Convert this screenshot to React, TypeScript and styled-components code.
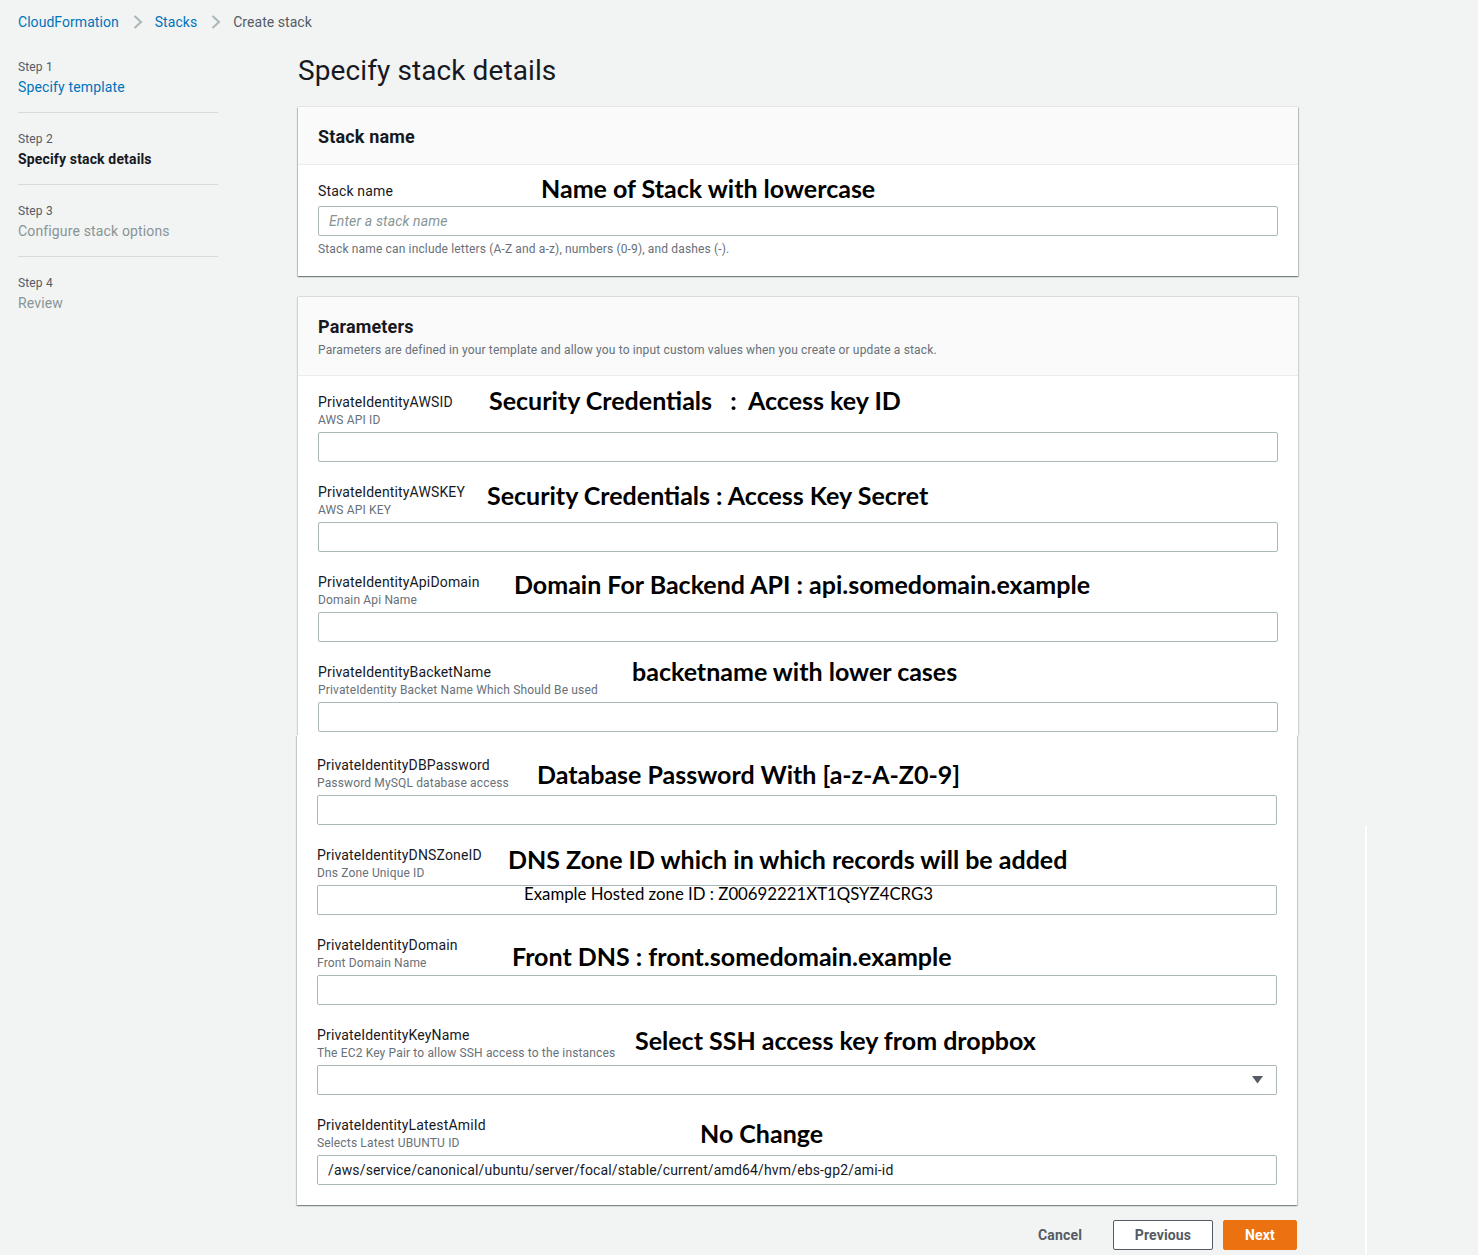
import React from "react";
import styled, { createGlobalStyle } from "styled-components";

type Note = { text: string; x: number; y: number };

type Param = {
  name: string;
  desc: string;
  note: Note;
  value?: string;
  select?: boolean;
  extra?: Note;
};

const upperParams: Param[] = [
  {
    name: "PrivateIdentityAWSID",
    desc: "AWS API ID",
    note: { text: "Security Credentials   :  Access key ID", x: 171, y: -7 },
  },
  {
    name: "PrivateIdentityAWSKEY",
    desc: "AWS API KEY",
    note: { text: "Security Credentials : Access Key Secret", x: 169, y: -2 },
  },
  {
    name: "PrivateIdentityApiDomain",
    desc: "Domain Api Name",
    note: { text: "Domain For Backend API : api.somedomain.example", x: 196, y: -3 },
  },
  {
    name: "PrivateIdentityBacketName",
    desc: "PrivateIdentity Backet Name Which Should Be used",
    note: { text: "backetname with lower cases", x: 314, y: -6 },
  },
];

const lowerParams: Param[] = [
  {
    name: "PrivateIdentityDBPassword",
    desc: "Password MySQL database access",
    note: { text: "Database Password With [a-z-A-Z0-9]", x: 220, y: 4 },
  },
  {
    name: "PrivateIdentityDNSZoneID",
    desc: "Dns Zone Unique ID",
    note: { text: "DNS Zone ID which in which records will be added", x: 191, y: -1 },
    extra: { text: "Example Hosted zone ID : Z00692221XT1QSYZ4CRG3", x: 207, y: 39 },
  },
  {
    name: "PrivateIdentityDomain",
    desc: "Front Domain Name",
    note: { text: "Front DNS : front.somedomain.example", x: 195, y: 6 },
  },
  {
    name: "PrivateIdentityKeyName",
    desc: "The EC2 Key Pair to allow SSH access to the instances",
    note: { text: "Select SSH access key from dropbox", x: 318, y: 0 },
    select: true,
  },
  {
    name: "PrivateIdentityLatestAmiId",
    desc: "Selects Latest UBUNTU ID",
    note: { text: "No Change", x: 383, y: 3 },
    value: "/aws/service/canonical/ubuntu/server/focal/stable/current/amd64/hvm/ebs-gp2/ami-id",
  },
];

const steps = [
  { step: "Step 1", title: "Specify template", state: "done" },
  { step: "Step 2", title: "Specify stack details", state: "active" },
  { step: "Step 3", title: "Configure stack options", state: "todo" },
  { step: "Step 4", title: "Review", state: "todo" },
] as const;

export default function App() {
  return (
    <>
      <GlobalStyle />
      <Breadcrumbs>
        <Crumb $link>CloudFormation</Crumb>
        <Chevron />
        <Crumb $link>Stacks</Crumb>
        <Chevron />
        <Crumb>Create stack</Crumb>
      </Breadcrumbs>

      <Layout>
        <Nav>
          {steps.map((s) => (
            <NavItem key={s.step}>
              <StepLabel>{s.step}</StepLabel>
              <StepTitle $state={s.state}>{s.title}</StepTitle>
            </NavItem>
          ))}
        </Nav>

        <Main>
          <Title>Specify stack details</Title>

          <Panel>
            <PanelHeader>
              <PanelTitle>Stack name</PanelTitle>
            </PanelHeader>
            <StackBody>
              <Field>
                <Label>Stack name</Label>
                <Annotation $x={223} $y={-8}>
                  Name of Stack with lowercase
                </Annotation>
                <Input $gap={5} placeholder="Enter a stack name" />
                <Hint>
                  Stack name can include letters (A-Z and a-z), numbers (0-9),
                  and dashes (-).
                </Hint>
              </Field>
            </StackBody>
          </Panel>

          <ParamsPanel>
            <PanelHeader>
              <PanelTitle>Parameters</PanelTitle>
              <PanelDesc>
                Parameters are defined in your template and allow you to input
                custom values when you create or update a stack.
              </PanelDesc>
            </PanelHeader>
            <FieldList $top={16} $bottom={3}>
              {upperParams.map((p) => (
                <ParamField key={p.name} param={p} />
              ))}
            </FieldList>
          </ParamsPanel>

          <Shifted>
            <ParamsPanelEnd>
              <FieldList $top={20} $bottom={20}>
                {lowerParams.map((p) => (
                  <ParamField key={p.name} param={p} />
                ))}
              </FieldList>
            </ParamsPanelEnd>
            <Actions>
              <TextButton>Cancel</TextButton>
              <OutlineButton>Previous</OutlineButton>
              <PrimaryButton>Next</PrimaryButton>
            </Actions>
          </Shifted>
        </Main>
      </Layout>
      <SeamLine />
    </>
  );
}

function ParamField({ param }: { param: Param }) {
  return (
    <Field>
      <Label>{param.name}</Label>
      <Desc>{param.desc}</Desc>
      <Annotation $x={param.note.x} $y={param.note.y}>
        {param.note.text}
      </Annotation>
      {param.select ? (
        <SelectBox>
          <svg width="11" height="8" viewBox="0 0 11 8">
            <path d="M0 0h11L5.5 7.5z" fill="#545b64" />
          </svg>
        </SelectBox>
      ) : (
        <Input $gap={4} defaultValue={param.value} readOnly />
      )}
      {param.extra && (
        <InlineNote $x={param.extra.x} $y={param.extra.y}>
          {param.extra.text}
        </InlineNote>
      )}
    </Field>
  );
}

function Chevron() {
  return (
    <ChevronIcon width="10" height="14" viewBox="0 0 10 14">
      <polyline
        points="1.5,1 8,7 1.5,13"
        fill="none"
        stroke="#aab7b8"
        strokeWidth="2"
      />
    </ChevronIcon>
  );
}

const GlobalStyle = createGlobalStyle`
  * { box-sizing: border-box; }
  body {
    margin: 0;
    background: #f2f3f3;
    font-family: Roboto, "Noto Sans", sans-serif;
    letter-spacing: 0.15px;
    color: #16191f;
  }
`;

const Breadcrumbs = styled.div`
  display: flex;
  align-items: center;
  height: 32px;
  padding: 12px 18px 0;
  font-size: 14px;
  line-height: 20px;
  letter-spacing: 0.05px;
`;

const Crumb = styled.span<{ $link?: boolean }>`
  color: ${(p) => (p.$link ? "#0073bb" : "#545b64")};
`;

const ChevronIcon = styled.svg`
  margin: 0 12px 0 14px;
`;

const Layout = styled.div`
  display: grid;
  grid-template-columns: 200px 1000px;
  column-gap: 80px;
  padding: 21px 0 0 18px;
`;

const Nav = styled.nav`
  display: flex;
  flex-direction: column;
`;

const NavItem = styled.div`
  display: flex;
  flex-direction: column;
  gap: 2px;
  padding: 18px 0 15px;
  border-bottom: 1px solid #d5dbdb;

  &:first-child {
    padding-top: 6px;
  }
  &:last-child {
    border-bottom: none;
  }
`;

const StepLabel = styled.span`
  font-size: 12px;
  line-height: 16px;
  color: #545b64;
`;

const StepTitle = styled.span<{ $state: "done" | "active" | "todo" }>`
  font-size: 14px;
  line-height: 20px;
  font-weight: ${(p) => (p.$state === "active" ? 700 : 400)};
  color: ${(p) =>
    p.$state === "done" ? "#0073bb" : p.$state === "active" ? "#16191f" : "#879596"};
`;

const Main = styled.main`
  display: flex;
  flex-direction: column;
  width: 1000px;
`;

const Title = styled.h1`
  margin: 0 0 18px;
  font-size: 28px;
  line-height: 36px;
  font-weight: 400;
  letter-spacing: 0.1px;
  color: #16191f;
`;

const Panel = styled.section`
  background: #fff;
  box-shadow: 0 0 0 1px rgba(0, 28, 36, 0.06), 0 1px 1px 0 rgba(0, 28, 36, 0.3),
    1px 1px 1px 0 rgba(0, 28, 36, 0.15), -1px 1px 1px 0 rgba(0, 28, 36, 0.15);
`;

const ParamsPanel = styled.section`
  margin-top: 21px;
  background: #fff;
  box-shadow: 0 -1px 0 0 rgba(0, 28, 36, 0.06), 1px 0 1px 0 rgba(0, 28, 36, 0.15),
    -1px 0 1px 0 rgba(0, 28, 36, 0.15);
`;

const Shifted = styled.div`
  margin-left: -1px;
  width: 1000px;
  display: flex;
  flex-direction: column;
`;

const ParamsPanelEnd = styled.section`
  background: #fff;
  box-shadow: 0 1px 1px 0 rgba(0, 28, 36, 0.3), 1px 1px 1px 0 rgba(0, 28, 36, 0.15),
    -1px 1px 1px 0 rgba(0, 28, 36, 0.15);
`;

const PanelHeader = styled.header`
  display: flex;
  flex-direction: column;
  gap: 5px;
  padding: 20px 20px 17px;
  background: #fafafa;
  border-bottom: 1px solid #eaeded;
`;

const PanelTitle = styled.h2`
  margin: 0;
  font-size: 18px;
  line-height: 20px;
  font-weight: 700;
  color: #16191f;
`;

const PanelDesc = styled.p`
  margin: 0;
  font-size: 12px;
  line-height: 16px;
  color: #687078;
`;

const StackBody = styled.div`
  padding: 16px 20px 19px;
`;

const FieldList = styled.div<{ $top: number; $bottom: number }>`
  display: flex;
  flex-direction: column;
  gap: 20px;
  padding: ${(p) => `${p.$top}px 20px ${p.$bottom}px`};
`;

const Field = styled.div`
  position: relative;
  display: flex;
  flex-direction: column;
`;

const Label = styled.label`
  font-size: 14px;
  line-height: 20px;
  color: #16191f;
`;

const Desc = styled.span`
  font-size: 12px;
  line-height: 16px;
  color: #687078;
`;

const Hint = styled.span`
  margin-top: 5px;
  font-size: 12px;
  line-height: 16px;
  color: #687078;
`;

const Input = styled.input<{ $gap: number }>`
  margin-top: ${(p) => p.$gap}px;
  width: 100%;
  height: 30px;
  padding: 0 10px;
  border: 1px solid #aab7b8;
  border-radius: 2px;
  background: #fff;
  font-family: Roboto, "Noto Sans", sans-serif;
  font-size: 14px;
  letter-spacing: 0.15px;
  color: #16191f;
  outline: none;

  &::placeholder {
    color: #879596;
    font-style: italic;
  }
`;

const SelectBox = styled.div`
  margin-top: 4px;
  height: 30px;
  display: flex;
  align-items: center;
  justify-content: flex-end;
  padding-right: 13px;
  border: 1px solid #aab7b8;
  border-radius: 2px;
  background: #fff;
`;

const Annotation = styled.span<{ $x: number; $y: number }>`
  position: absolute;
  left: ${(p) => p.$x}px;
  top: ${(p) => p.$y}px;
  font-family: Lato, "Open Sans", sans-serif;
  font-weight: 700;
  font-size: 25px;
  line-height: 30px;
  letter-spacing: 0;
  white-space: pre;
  color: #000;
`;

const InlineNote = styled.span<{ $x: number; $y: number }>`
  position: absolute;
  left: ${(p) => p.$x}px;
  top: ${(p) => p.$y}px;
  font-family: Lato, "Open Sans", sans-serif;
  font-size: 16.8px;
  line-height: 20px;
  letter-spacing: 0;
  color: #000;
`;

const Actions = styled.div`
  display: flex;
  justify-content: flex-end;
  gap: 10px;
  margin-top: 15px;
`;

const ButtonBase = styled.button`
  height: 30px;
  padding: 0 20px;
  border-radius: 2px;
  font-family: Roboto, "Noto Sans", sans-serif;
  font-size: 14px;
  font-weight: 700;
  letter-spacing: 0.15px;
  cursor: pointer;
`;

const TextButton = styled(ButtonBase)`
  border: 1px solid transparent;
  background: transparent;
  color: #545b64;
`;

const OutlineButton = styled(ButtonBase)`
  width: 100px;
  border: 1px solid #545b64;
  background: #fff;
  color: #545b64;
`;

const PrimaryButton = styled(ButtonBase)`
  width: 74px;
  border: 1px solid #ec7211;
  background: #ec7211;
  color: #fff;
`;

const SeamLine = styled.div`
  position: absolute;
  left: 1365px;
  top: 826px;
  width: 2px;
  height: 429px;
  background: #fff;
`;
